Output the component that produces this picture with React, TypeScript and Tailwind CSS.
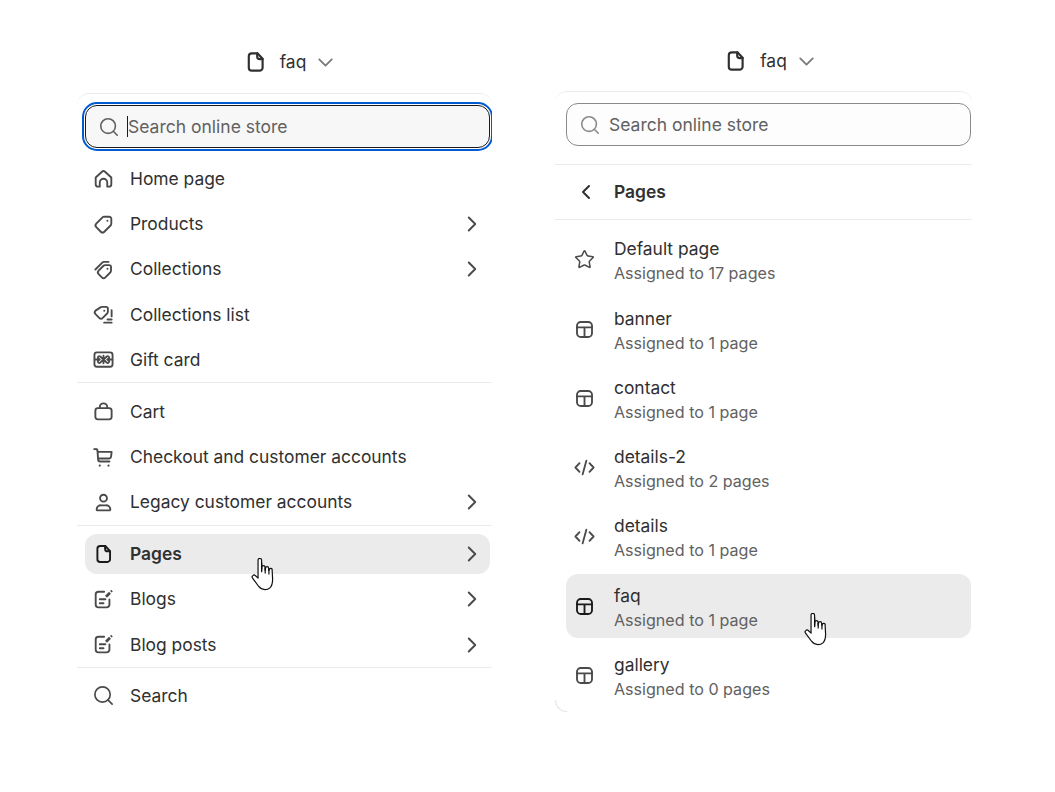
import { ChevronDown, ChevronLeft, ChevronRight, Search, Star } from 'lucide-react';
import type { ReactNode } from 'react';

// ---------------------------------------------------------------------------
// Icons, drawn on a 20px grid like the theme editor's own set
// ---------------------------------------------------------------------------
interface IconProps {
  children: ReactNode;
  className?: string;
  weight?: number;
}

function Icon({ children, className = 'w-[25px] h-[25px]', weight = 1.5 }: IconProps) {
  return (
    <svg
      viewBox="0 0 20 20"
      fill="none"
      stroke="currentColor"
      strokeWidth={weight}
      strokeLinecap="round"
      strokeLinejoin="round"
      className={`shrink-0 ${className}`}
      aria-hidden="true"
    >
      {children}
    </svg>
  );
}

const tag = 'M10.6 3.75h4a1.65 1.65 0 0 1 1.65 1.65v4a2 2 0 0 1-.6 1.4l-5 5a2 2 0 0 1-2.8 0l-3.65-3.65a2 2 0 0 1 0-2.8l5-5a2 2 0 0 1 1.4-.6z';

const HomeIcon = () => (
  <Icon>
    <path d="M3.75 9.2 9 4.4a1.5 1.5 0 0 1 2 0l5.25 4.8v5.3a2 2 0 0 1-2 2H13v-3.3a3 3 0 0 0-6 0v3.3H5.75a2 2 0 0 1-2-2z" />
  </Icon>
);
const TagIcon = () => (
  <Icon>
    <path d={tag} />
    <circle cx="13.1" cy="6.9" r=".8" fill="currentColor" stroke="none" />
  </Icon>
);
const TagsIcon = () => (
  <Icon>
    <path d="M11.5 6.5h3a1.5 1.5 0 0 1 1.5 1.5v3a2 2 0 0 1-.6 1.4l-3.9 3.9a2 2 0 0 1-2.8 0l-2.6-2.6a2 2 0 0 1 0-2.8l3.9-3.9a2 2 0 0 1 1.5-.5z" />
    <path d="M3.5 10 9 4.5a2 2 0 0 1 1.4-.6H14" />
    <circle cx="13.2" cy="9.3" r=".8" fill="currentColor" stroke="none" />
  </Icon>
);
const TagListIcon = () => (
  <Icon>
    <path d="M8.8 3.9h3.2a1.5 1.5 0 0 1 1.5 1.5v2.4a2 2 0 0 1-.6 1.4l-3.5 3.5a2 2 0 0 1-2.8 0l-3-3a2 2 0 0 1 0-2.8l3.7-2.4a2 2 0 0 1 1.5-.6z" />
    <circle cx="10.6" cy="6.9" r=".8" fill="currentColor" stroke="none" />
    <path d="M16.5 6.5v5M13.2 14h3.3M10.5 16.5h6" />
  </Icon>
);
const GiftCardIcon = () => (
  <Icon>
    <rect x="2.75" y="4.25" width="14.5" height="11.5" rx="2" />
    <path d="M10 7v6M3 10h3M14 10h3M10 10 7.4 7.6a1.2 1.2 0 0 0-1.8 1.5L7 10 5.6 11a1.2 1.2 0 0 0 1.8 1.5zM10 10l2.6-2.4a1.2 1.2 0 0 1 1.8 1.5L13 10l1.4 1a1.2 1.2 0 0 1-1.8 1.5z" />
  </Icon>
);
const BagIcon = () => (
  <Icon>
    <rect x="3.5" y="7.25" width="13" height="9" rx="2" />
    <path d="M7 7.25V6.5a3 3 0 0 1 6 0v.75" />
  </Icon>
);
const CartIcon = () => (
  <Icon>
    <path d="M2.5 3.25h1.2a1.5 1.5 0 0 1 1.5 1.4l.5 7.1a1.5 1.5 0 0 0 1.5 1.4h7.6M5.4 5.5h11.1l-.5 4a1.5 1.5 0 0 1-1.5 1.3H5.7" />
    <circle cx="7" cy="16.4" r=".9" fill="currentColor" stroke="none" />
    <circle cx="14" cy="16.4" r=".9" fill="currentColor" stroke="none" />
  </Icon>
);
const PersonIcon = () => (
  <Icon>
    <circle cx="10" cy="6.5" r="2.75" />
    <path d="M4.5 15.5a3.5 3.5 0 0 1 3.5-3.25h4a3.5 3.5 0 0 1 3.5 3.25.75.75 0 0 1-.75.75h-9.5a.75.75 0 0 1-.75-.75z" />
  </Icon>
);
const FileIcon = ({ className = 'w-[22px] h-[22px] mx-[1.5px]', weight = 1.75 }: { className?: string; weight?: number }) => (
  <Icon className={className} weight={weight}>
    <path d="M6.5 2.75h4.7l4.3 4.6v7.4a2.5 2.5 0 0 1-2.5 2.5h-6.5A2.5 2.5 0 0 1 4 14.75v-9.5a2.5 2.5 0 0 1 2.5-2.5z" />
    <path d="M11 2.75v2.6a2.2 2.2 0 0 0 2.2 2.2h2.3" />
  </Icon>
);
const BlogIcon = () => (
  <Icon>
    <path d="M10.5 3.75H6a2.25 2.25 0 0 0-2.25 2.25v8A2.25 2.25 0 0 0 6 16.25h6.5A2.25 2.25 0 0 0 14.75 14v-4" />
    <path d="M7 9.75h4.5M7 13h3" />
    <path d="m12 7.75 3.2-3.2" strokeWidth={2.2} strokeLinecap="butt" />
    <path d="m15.9 3.8.9-.9" strokeWidth={1.8} strokeLinecap="butt" />
  </Icon>
);
const LayoutIcon = () => (
  <Icon>
    <rect x="4" y="4" width="12" height="12" rx="3" />
    <path d="M4 8.25h12M10 8.25V16" />
  </Icon>
);
const CodeIcon = () => (
  <Icon>
    <path d="M6 6.5 2.75 10 6 13.5M14 6.5l3.25 3.5L14 13.5M11.5 4.5l-3 11" />
  </Icon>
);

// ---------------------------------------------------------------------------
// HandCursor — the pointer left in the screenshot
// ---------------------------------------------------------------------------
function HandCursor({ className }: { className: string }) {
  return (
    <svg viewBox="1 1 20 30" className={`absolute w-[24px] h-[33px] ${className}`} aria-hidden="true">
      <path
        d="M6.5 3a1.6 1.6 0 0 1 3.2 0v9.5l.3-3.2a1.4 1.4 0 0 1 2.8 0l.2 3 .3-2a1.4 1.4 0 0 1 2.8 0l.2 2.2.4-1a1.3 1.3 0 0 1 2.6.4l.4 7.6c.2 4.6-.8 7-2.4 8.6-1.2 1.2-2.8 1.6-4.6 1.6-2.6 0-4.2-1-5.6-2.8L1.5 19.2a1.6 1.6 0 0 1 .2-2.2 1.7 1.7 0 0 1 2.3-.1l2.5 2.4z"
        fill="#fff"
        stroke="#111"
        strokeWidth="1.1"
        strokeLinejoin="round"
      />
      <path d="M9.8 5v9M13 10v5M16.4 11v5" stroke="#111" strokeWidth="1.1" fill="none" />
    </svg>
  );
}

// ---------------------------------------------------------------------------
// Sidebar rows
// ---------------------------------------------------------------------------
interface NavRowProps {
  icon: ReactNode;
  label: string;
  more?: boolean;
  active?: boolean;
  children?: ReactNode;
}

function NavRow({ icon, label, more, active, children }: NavRowProps) {
  return (
    <div
      className={`relative flex items-center h-10 ml-2 mr-[2px] pl-[6px] pr-[5px] rounded-xl ${
        active ? 'bg-[#ebebeb] text-[#1a1a1a] font-semibold' : 'text-[#4a4a4a]'
      }`}
    >
      {icon}
      <span className="ml-[14px] text-[17.4px] text-[#303030]">{label}</span>
      {more && <ChevronRight className="ml-auto w-[26px] h-[26px] text-[#4a4a4a]" strokeWidth={1.75} />}
      {children}
    </div>
  );
}

interface TemplateRowProps {
  icon: ReactNode;
  name: string;
  assigned: string;
  active?: boolean;
  children?: ReactNode;
}

function TemplateRow({ icon, name, assigned, active, children }: TemplateRowProps) {
  return (
    <div
      className={`relative flex items-center h-16 shrink-0 pl-[6px] rounded-xl ${
        active ? 'bg-[#ebebeb] text-[#1a1a1a]' : 'text-[#4a4a4a]'
      }`}
    >
      {icon}
      <div className="ml-[17px] pt-[2px] flex flex-col">
        <span className="text-[17.4px] leading-[25px] text-[#303030]">{name}</span>
        <span className="text-[16.1px] leading-[24px] text-[#616161]">{assigned}</span>
      </div>
      {children}
    </div>
  );
}

function Divider({ className = '' }: { className?: string }) {
  return <div className={`h-px shrink-0 bg-[#ebebeb] ${className}`} />;
}

function TitleBar({ className }: { className: string }) {
  return (
    <div className={`flex items-center justify-center h-[24px] text-[#303030] ${className}`}>
      <FileIcon className="w-[24px] h-[24px]" weight={1.8} />
      <span className="ml-[12px] text-[17.4px]">faq</span>
      <ChevronDown className="ml-[7px] w-[25px] h-[25px] text-[#7a7a7a]" strokeWidth={1.75} />
    </div>
  );
}

// ---------------------------------------------------------------------------
// Left panel — top level of the template picker
// ---------------------------------------------------------------------------
function MainPanel() {
  return (
    <div className="w-[415px] flex flex-col pt-[50px]">
      <TitleBar className="pl-[13px]" />
      <div className="mt-[19px] h-[619px] border-t border-[#ebebeb] rounded-t-xl overflow-hidden flex flex-col">
        <div className="ml-2 mr-[2px] mt-[11px] h-[43px] shrink-0 flex items-center pl-[12px] rounded-xl bg-[#f7f7f7] border border-[#1a1a1a] outline-2 outline-offset-1 outline-[#005bd3]">
          <Search className="w-[22px] h-[22px] text-[#616161]" strokeWidth={1.75} />
          <span className="ml-[7px] w-px h-[21px] bg-[#1a1a1a]" />
          <span className="pt-px text-[17.5px] text-[#616161]">Search online store</span>
        </div>
        <div className="mt-[10.8px] flex flex-col gap-[5.3px]">
          <NavRow icon={<HomeIcon />} label="Home page" />
          <NavRow icon={<TagIcon />} label="Products" more />
          <NavRow icon={<TagsIcon />} label="Collections" more />
          <NavRow icon={<TagListIcon />} label="Collections list" />
          <NavRow icon={<GiftCardIcon />} label="Gift card" />
        </div>
        <Divider className="mt-[2px]" />
        <div className="mt-[8.8px] flex flex-col gap-[5.3px]">
          <NavRow icon={<BagIcon />} label="Cart" />
          <NavRow icon={<CartIcon />} label="Checkout and customer accounts" />
          <NavRow icon={<PersonIcon />} label="Legacy customer accounts" more />
        </div>
        <Divider className="mt-[2.6px]" />
        <div className="mt-2 flex flex-col gap-[5.3px]">
          <NavRow icon={<FileIcon />} label="Pages" more active>
            <HandCursor className="left-[166px] top-[24px]" />
          </NavRow>
          <NavRow icon={<BlogIcon />} label="Blogs" more />
          <NavRow icon={<BlogIcon />} label="Blog posts" more />
        </div>
        <Divider className="mt-[2.4px]" />
        <div className="mt-2">
          <NavRow icon={<Search className="w-[23px] h-[23px] mx-px shrink-0" strokeWidth={1.75} />} label="Search" />
        </div>
      </div>
    </div>
  );
}

// ---------------------------------------------------------------------------
// Right panel — the Pages submenu
// ---------------------------------------------------------------------------
function PagesPanel() {
  return (
    <div className="w-[417px] flex flex-col pt-[49px] ml-[63px]">
      <TitleBar className="pl-[16px]" />
      <div className="relative mt-[18px] h-[621px] border-t border-[#ebebeb] rounded-t-xl overflow-hidden flex flex-col">
        <div className="ml-[11px] mr-px mt-[11px] h-[43px] shrink-0 flex items-center pl-[12px] rounded-xl bg-[#fdfdfd] border border-[#8a8a8a]">
          <Search className="w-[22px] h-[22px] text-[#8a8a8a]" strokeWidth={1.75} />
          <span className="ml-[8px] pt-px text-[17.5px] text-[#616161]">Search online store</span>
        </div>
        <Divider className="mt-[18px]" />
        <div className="flex items-center h-[54px] shrink-0 pl-[19px] text-[#303030]">
          <ChevronLeft className="w-[24px] h-[24px]" strokeWidth={2} />
          <span className="ml-[16px] text-[17.4px] font-semibold">Pages</span>
        </div>
        <Divider />
        <div className="mt-[7.8px] ml-[11px] mr-px flex flex-col gap-[5.3px]">
          <TemplateRow icon={<Star className="w-[21px] h-[21px] mx-[2px] shrink-0" strokeWidth={1.75} />} name="Default page" assigned="Assigned to 17 pages" />
          <TemplateRow icon={<LayoutIcon />} name="banner" assigned="Assigned to 1 page" />
          <TemplateRow icon={<LayoutIcon />} name="contact" assigned="Assigned to 1 page" />
          <TemplateRow icon={<CodeIcon />} name="details-2" assigned="Assigned to 2 pages" />
          <TemplateRow icon={<CodeIcon />} name="details" assigned="Assigned to 1 page" />
          <TemplateRow icon={<LayoutIcon />} name="faq" assigned="Assigned to 1 page" active>
            <HandCursor className="left-[238px] top-[39px]" />
          </TemplateRow>
          <TemplateRow icon={<LayoutIcon />} name="gallery" assigned="Assigned to 0 pages" />
        </div>
        {/* rounded corner of the clipped sheet, bottom left */}
        <div className="absolute left-0 bottom-0 w-3 h-3 border-l border-b border-[#e3e3e3] rounded-bl-xl" />
      </div>
    </div>
  );
}

export default function App() {
  return (
    <div className="w-[1055px] h-[792px] bg-white flex pl-[77px] font-['Inter',sans-serif] overflow-hidden">
      <MainPanel />
      <PagesPanel />
    </div>
  );
}
